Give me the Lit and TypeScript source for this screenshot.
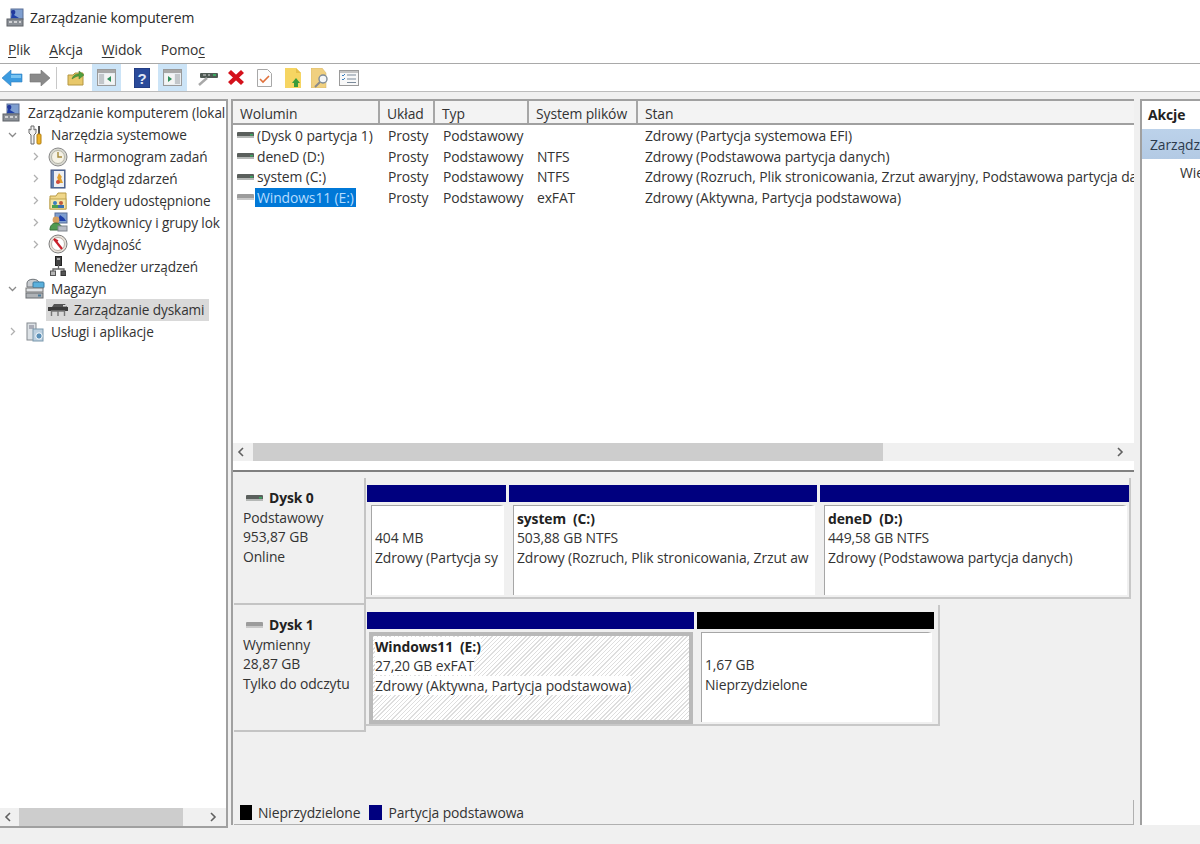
import { LitElement, html, css, svg } from "lit";
import { customElement } from "lit/decorators.js";

const ic = (w: number, h: number, body: unknown) =>
  html`<svg width=${w} height=${h} viewBox="0 0 ${w} ${h}" style="display:block;flex:none">${body}</svg>`;

const compIcon = ic(18, 19, svg`
  <rect x="5" y="1" width="12" height="10" fill="#7f9fd0" stroke="#5a6f96"/>
  <path d="M7 2c3 0 3 3 1 5l5 3H5z" fill="#1f3fa8"/>
  <circle cx="7" cy="4" r="2" fill="#23389a"/>
  <rect x="1" y="11" width="16" height="7" fill="#8a8f96" stroke="#5f6368"/>
  <path d="M3 14h3M8 14h3M13 14h2" stroke="#e8e8e8" stroke-width="1.5"/>`);
const toolsIcon = ic(16, 20, svg`
  <path d="M4 1v4l-2-1v4l2 2v9h3v-9l2-2V4L7 5V1z" fill="#f2f2f2" stroke="#6b6b6b"/>
  <path d="M12 1v8" stroke="#555" stroke-width="2"/>
  <rect x="10" y="9" width="4" height="10" rx="1" fill="#f0b428" stroke="#b27e10"/>`);
const clockIcon = ic(20, 20, svg`
  <circle cx="10" cy="10" r="9" fill="#d8d8d0" stroke="#8a8a8a"/>
  <circle cx="10" cy="10" r="6.5" fill="#f5f2e6" stroke="#b5b5a8"/>
  <path d="M10 5v5h4" fill="none" stroke="#a58a3c" stroke-width="1.4"/>`);
const bookIcon = ic(16, 20, svg`
  <rect x="1" y="1" width="14" height="18" fill="#5f7fb0" stroke="#3d4f7a"/>
  <rect x="4" y="2" width="10" height="16" fill="#eef0f2"/>
  <path d="M9 4l3 4-1 1 2 5H6l2-4-1-1z" fill="#e0a030"/>
  <circle cx="8" cy="13" r="2" fill="#d04a3a"/>`);
const shareIcon = ic(18, 18, svg`
  <path d="M1 4h6l2-3h8v16H1z" fill="#f0d78a" stroke="#b99b45"/>
  <rect x="1" y="7" width="16" height="10" fill="#f6e6a8" stroke="#c0a550"/>
  <circle cx="6" cy="11" r="2" fill="#3a7fc0"/><rect x="3" y="13" width="6" height="3" fill="#4aa050"/>
  <circle cx="12" cy="11" r="2" fill="#c05a3a"/><rect x="9" y="13" width="6" height="3" fill="#3a70b0"/>`);
const usersIcon = ic(20, 20, svg`
  <rect x="7" y="1" width="12" height="10" fill="#7f9fd0" stroke="#5a6f96"/>
  <path d="M9 9l3-6 4 3 2 3z" fill="#1f3fa8"/>
  <circle cx="8" cy="8" r="3.4" fill="#d8a060"/>
  <path d="M2 18c0-5 3-7 6-7s6 2 6 7z" fill="#4f9a50" stroke="#386f3a"/>
  <rect x="10" y="14" width="9" height="5" fill="#b8bcc4" stroke="#7f848c"/>`);
const perfIcon = ic(20, 20, svg`
  <circle cx="10" cy="10" r="9" fill="#e6e0d8" stroke="#7f7f7f"/>
  <circle cx="10" cy="10" r="6.5" fill="#fff" stroke="#b9b0a8"/>
  <path d="M6 5l8 10" stroke="#c8202a" stroke-width="2.2"/>
  <path d="M6 5l4 2" stroke="#c8202a" stroke-width="1.6"/>`);
const devIcon = ic(16, 20, svg`
  <rect x="5.5" y="0.5" width="6" height="9" fill="#444" stroke="#222"/>
  <rect x="7" y="2" width="3" height="2" fill="#aaa"/>
  <path d="M8.5 9v4M3 16v-3h11v3" fill="none" stroke="#666" stroke-width="1.3"/>
  <rect x="0.5" y="15" width="5" height="4.5" fill="#b5b5b5" stroke="#555"/>
  <rect x="11" y="15" width="5" height="4.5" fill="#555" stroke="#333"/>`);
const storeIcon = ic(20, 21, svg`
  <path d="M2 5c0-5 12-5 12 0v4H2z" fill="#c8ccd0" stroke="#70757a"/>
  <rect x="8" y="4" width="11" height="6" rx="1" fill="#5ab0dc" stroke="#3a7aa0"/>
  <rect x="1" y="10" width="17" height="4" fill="#dfe2e5" stroke="#777"/>
  <rect x="1" y="15" width="17" height="5" fill="#aeb2b6" stroke="#6a6e72"/>
  <rect x="13" y="16.5" width="3" height="2" fill="#4a7a9a"/>`);
const dmIcon = ic(20, 14, svg`
  <rect x="0" y="4" width="20" height="4" fill="#3c3c3c"/>
  <path d="M6 1h11l2 3H4z" fill="#555"/>
  <rect x="15" y="2" width="3" height="1.5" fill="#ddd"/>
  <path d="M3.5 13V8h13v5M10 8v5" fill="none" stroke="#777" stroke-width="1.4"/>`);
const svcIcon = ic(18, 20, svg`
  <rect x="1" y="1" width="9" height="17" fill="#dde2e6" stroke="#848a90"/>
  <path d="M3 4h5M3 6h5" stroke="#778"/>
  <rect x="7" y="7" width="10" height="12" fill="#bcd0e0" stroke="#7a98ac"/>
  <circle cx="13" cy="14" r="3.2" fill="#5a90b8" stroke="#fff"/>`);

const diskIcon = (dark: boolean) => ic(17, 8, svg`
  <rect x="0" y="1" width="17" height="5" rx="1" fill=${dark ? "#5a5f5c" : "#9c9c9c"}/>
  <rect x="0" y="5" width="17" height="2" fill=${dark ? "#b5b8b6" : "#c9c9c9"}/>
  ${dark ? svg`<rect x="13" y="3" width="3" height="1.5" fill="#3aa860"/>` : ""}`);

const toolbar = [
  ic(21, 16, svg`<path d="M0 8l9-8v4h11v8H9v4z" fill="#3b9be0" stroke="#2f7fc0" stroke-width=".6"/><rect x="9" y="5" width="10" height="3" fill="#78c4f2"/>`),
  ic(21, 16, svg`<path d="M21 8l-9-8v4H1v8h11v4z" fill="#8a8a8a" stroke="#747474" stroke-width=".6"/>`),
  html`<span class="sep"></span>`,
  ic(18, 17, svg`<path d="M1 6h5l2-2h8v12H1z" fill="#e8c86a" stroke="#b49640"/><path d="M5 10c1-4 4-5 7-5V2l5 4-5 4V7c-2 0-4 1-7 3z" fill="#4f9e3e" stroke="#3a7a2e" stroke-width=".5"/>`),
  html`<span class="on">${ic(19, 17, svg`<rect x=".5" y=".5" width="18" height="16" fill="#e9eef2" stroke="#9a9a9a"/><rect x="1" y="1" width="17" height="3" fill="#a8a8a8"/><rect x="2" y="5" width="5" height="10" fill="#c2c6ca"/><rect x="8" y="5" width="9" height="10" fill="#f4f4f4"/><path d="M14 7v6l-4-3z" fill="#2e8f5c"/>`)}</span>`,
  html`<span class="help">${ic(16, 20, svg`<rect x="0" y="0" width="16" height="20" fill="#2a4a9a" stroke="#1c3272"/><text x="8" y="16" font-size="15" font-weight="700" text-anchor="middle" fill="#dfe6f6" font-family="Liberation Sans">?</text>`)}</span>`,
  html`<span class="on">${ic(19, 17, svg`<rect x=".5" y=".5" width="18" height="16" fill="#e9eef2" stroke="#9a9a9a"/><rect x="1" y="1" width="17" height="3" fill="#a8a8a8"/><rect x="2" y="5" width="9" height="10" fill="#f4f4f4"/><rect x="12" y="5" width="5" height="10" fill="#c2c6ca"/><path d="M5 7v6l4-3z" fill="#2e8f5c"/>`)}</span>`,
  html`<span class="dsk">${ic(20, 18, svg`<rect x="2" y="4" width="18" height="5" rx="1" fill="#4f5a54"/><path d="M5 6h3M10 6h2" stroke="#d8d8d8"/><rect x="15" y="5" width="3" height="2" fill="#3aa860"/><path d="M9 9L1 16" stroke="#a8a8a8" stroke-width="2.4"/>`)}</span>`,
  ic(18, 17, svg`<path d="M2.500 2.500l13 12M15.500 2.500l-13 12" stroke="#d4111b" stroke-width="4.400" fill="none"/>`),
  ic(15, 18, svg`<path d="M.5.5h10l4 4v13H.5z" fill="#fdfdfd" stroke="#a8a8a8"/><path d="M3 10l3 3 6-6" fill="none" stroke="#e0703a" stroke-width="1.6"/>`),
  ic(16, 20, svg`<path d="M0 0h11l5 5v15H0z" fill="#f6d562"/><path d="M11 0l5 5h-5z" fill="#e6c04a"/><path d="M11 10l4 5h-2v4H9v-4H7z" fill="#3a9c3a"/>`),
  ic(18, 20, svg`<path d="M0 0h11l4 5v15H0z" fill="#f0d080" stroke="#d0b060" stroke-width=".5"/><circle cx="12" cy="11" r="4" fill="#f4f6f8" stroke="#7f8c98" stroke-width="1.4"/><path d="M9 14l-5 5" stroke="#8a8a8a" stroke-width="2"/>`),
  ic(20, 16, svg`<rect x=".5" y=".5" width="19" height="15" fill="#f8f8f8" stroke="#9a9a9a"/><rect x="1" y="1" width="18" height="2" fill="#c4c4c4"/><path d="M3 5l1 1 2-2M3 9l1 1 2-2" fill="none" stroke="#3a7fc0"/><path d="M8 5h9M8 9h9M8 12.500h9" stroke="#7a8a9a"/>`),
];

const tree: [number, string, string, unknown, boolean?][] = [
  [0, "", "Zarządzanie komputerem (lokal", compIcon],
  [1, "v", "Narzędzia systemowe", toolsIcon],
  [2, ">", "Harmonogram zadań", clockIcon],
  [2, ">", "Podgląd zdarzeń", bookIcon],
  [2, ">", "Foldery udostępnione", shareIcon],
  [2, ">", "Użytkownicy i grupy lok", usersIcon],
  [2, ">", "Wydajność", perfIcon],
  [2, "", "Menedżer urządzeń", devIcon],
  [1, "v", "Magazyn", storeIcon],
  [2, "", "Zarządzanie dyskami", dmIcon, true],
  [1, ">", "Usługi i aplikacje", svcIcon],
];

const vols = [
  ["(Dysk 0 partycja 1)", "", "Zdrowy (Partycja systemowa EFI)"],
  ["deneD (D:)", "NTFS", "Zdrowy (Podstawowa partycja danych)"],
  ["system (C:)", "NTFS", "Zdrowy (Rozruch, Plik stronicowania, Zrzut awaryjny, Podstawowa partycja da"],
  ["Windows11 (E:)", "exFAT", "Zdrowy (Aktywna, Partycja podstawowa)"],
];

const chev = (d: string) =>
  d === ""
    ? html`<span class="chev"></span>`
    : html`<span class="chev">${ic(9, 9, d === "v"
        ? svg`<path d="M1 3l3.500 3.500L8 3" fill="none" stroke="#8a8a8a" stroke-width="1.3"/>`
        : svg`<path d="M3 1l3.500 3.500L3 8" fill="none" stroke="#b0b0b0" stroke-width="1.3"/>`)}</span>`;

const arrow = (left: boolean) => ic(8, 10, svg`<path d=${left ? "M6 1L2 5l4 4" : "M2 1l4 4-4 4"} fill="none" stroke="#606060" stroke-width="1.6"/>`);

@customElement("app-root")
export class AppRoot extends LitElement {
  static styles = css`
    :host { display: flex; flex-direction: column; width: 1200px; height: 844px; overflow: hidden; background: #f0f0f0;
      font: 13.9px "Open Sans", "Noto Sans", sans-serif; color: #333; letter-spacing: -0.1px; }
    .title { height: 34px; background: #fff; display: flex; align-items: center; gap: 6px; padding-left: 6px; color: #2a2a2a; }
    .menu { background: #fff; display: flex; align-items: center; padding: 2px 0 0 8px; gap: 19px; box-sizing: border-box; border-bottom: 1px solid #a9a9a9; flex: none; height: 30px; }
    .tools { height: 28px; background: #fff; display: grid; grid-template-columns: 25px 28px 7px 32px 29px 36px 30px 37px 24px 32px 25px 30px 27px; border-bottom: 1px solid #bcbcbc; flex: none; box-sizing: border-box; }
    .tools > * { justify-self: center; align-self: center; }
    .sep { display: block; width: 1px; height: 22px; background: #c8c8c8; }
    .on { display: flex; align-items: center; justify-content: center; width: 29px; height: 27px; background: #cce4f7; }
    .help { margin-left: 6px; }
    .dsk { margin-left: 5px; }
    .main { flex: 1; display: flex; gap: 3px; padding-top: 7px; min-height: 0; }
    .left { width: 226px; height: 725px; flex: none; background: #fff; border: solid #a0a0a0; border-width: 2px 2px 2px 0; display: flex; flex-direction: column; }
    .treebox { flex: 1; overflow: hidden; padding-top: 1px; display: grid; grid-auto-rows: 21.9px; align-content: start; font-size: 13.6px; }
    .tr { display: flex; align-items: center; white-space: nowrap; min-width: 0; overflow: hidden; color: #333; }
    .tr.l0 { padding-left: 1px; }
    .tr.l1 { padding-left: 7px; }
    .tr.l2 { padding-left: 30px; }
    .chev { width: 18px; flex: none; display: flex; padding-left: 1px; box-sizing: border-box; }
    .ti { width: 20px; flex: none; display: flex; justify-content: center; }
    .lbl { padding-left: 6px; }
    .tr.l0 .lbl { padding-left: 7px; }
    .tr.sel { background: linear-gradient(#d9d9d9, #d9d9d9) 46px 0 / 163px 100% no-repeat; }
    .hscroll { height: 18px; flex: none; background: #f0f0f0; display: flex; align-items: center; justify-content: space-between; padding: 0 9px 0 4px; position: relative; }
    .thumb-l { position: absolute; left: 19px; top: 0; bottom: 0; width: 164px; background: #cdcdcd; }
    .center { width: 901px; height: 726px; flex: none; border-left: 2px solid #a0a0a0; display: flex; flex-direction: column; }
    .list { background: #fff; border-top: 2px solid #a0a0a0; border-bottom: 2px solid #808080; box-sizing: border-box; height: 373px; flex: none; display: flex; flex-direction: column; }
    .row { display: grid; grid-template-columns: 147px 55px 94px 109px 1fr; white-space: nowrap; }
    .head { height: 24px; box-sizing: border-box; background: #f3f3f3; border-bottom: 2px solid #a0a0a0; flex: none; }
    .head span { padding: 3px 0 0 7px; border-right: 2px solid #a6a6a6; overflow: hidden; }
    .head span:last-child { border-right: none; }
    .rows { flex: 1; display: grid; grid-auto-rows: 20.7px; align-content: start; }
    .rows .row { align-items: center; }
    .rows .row > span { padding-left: 8px; overflow: hidden; }
    .rows .row > span:last-child { padding-left: 7px; }
    .rows .row > .c1 { display: flex; align-items: center; gap: 3px; padding-left: 4px; }
    .hl { background: #0078d7; color: #b5dcff; padding: 0 2px; margin-left: -2px; }
    .vscroll { height: 18px; flex: none; background: #f0f0f0; display: flex; align-items: center; justify-content: space-between; padding: 0 10px 0 4px; position: relative; margin-bottom: 9px; }
    .thumb-c { position: absolute; left: 20px; top: 0; bottom: 0; width: 630px; background: #cdcdcd; }
    .graph { flex: 1; display: flex; flex-direction: column; padding: 6px 0 0 1px; min-height: 0; }
    .disk { display: flex; height: 127px; flex: none; }
    .info { height: 127px; box-sizing: border-box; width: 132px; flex: none; border: solid #c4c4c4; border-width: 0 2px 2px 0; padding: 10px 0 0 9px; line-height: 19.4px; }
    .dname { display: flex; align-items: center; gap: 6px; font-weight: 700; color: #222; margin: -1px 0 0 3px; height: 21px; }
    .parts { display: flex; border: solid #c8c8c8; border-width: 0 2px 2px 0; height: 112px; padding: 7px 0 0 1px; gap: 3px; align-self: flex-start; }
    .d1 .parts { padding-right: 4px; }
    .part { display: flex; flex-direction: column; flex: none; }
    .bar { height: 17px; flex: none; background: #00007f; }
    .bar.k { background: #000; }
    .body { height: 90px; margin: 3px 2px 0 4px; background: #fff; border: solid #a6a6a6; border-width: 1px 0 0 1px; border-right: 4px solid #fff; padding: 3px 0 0 3px; line-height: 19.4px; overflow: hidden; white-space: nowrap; box-sizing: border-box; }
    .body.sel { margin: 3px 1px 0 2px; height: 92px; border: 4px solid #b9b9b9; padding: 1px 0 0 2px; background: repeating-linear-gradient(135deg, #dedede 0 1px, #fff 1px 3px); }
    .body.sel span { background: #fff; }
    .body b { color: #222; display: block; }
    .body .sp { display: block; height: 19.4px; }
    .p138 { width: 139px; } .p308 { width: 308px; } .p309 { width: 309px; } .p326 { width: 327px; } .p237 { width: 237px; }
    .legend { margin-top: auto; height: 24px; flex: none; display: flex; align-items: center; gap: 6px; border-bottom: 1px solid #b0b0b0; border-right: 1px solid #b0b0b0; padding-left: 6px; }
    .sw { width: 12px; height: 15px; flex: none; background: #000; }
    .sw.b { background: #00007f; margin-left: 3px; width: 13px; }
    .right { flex: 1; margin-left: 3px; height: 724px; background: #fff; border-left: 2px solid #a0a0a0; border-top: 2px solid #a0a0a0; white-space: nowrap; overflow: hidden; }
    .ah { height: 28px; padding: 4px 0 0 6px; box-sizing: border-box; font-weight: 700; color: #222; }
    .az { height: 30px; background: linear-gradient(#bcd2ea, #b3cae4); display: flex; align-items: center; padding-left: 8px; color: #2c3a4c; }
    .aw { padding: 4px 0 0 38px; }
    u { text-underline-offset: 2px; }
  `;

  render() {
    return html`
      <div class="title">${compIcon}<span>Zarządzanie komputerem</span></div>
      <div class="menu">
        <span><u>P</u>lik</span><span><u>A</u>kcja</span><span><u>W</u>idok</span><span>Pomo<u>c</u></span>
      </div>
      <div class="tools">${toolbar}</div>
      <div class="main">
        <div class="left">
          <div class="treebox">
            ${tree.map(([l, c, t, i, s]) => html`
              <div class="tr l${l} ${s ? "sel" : ""}">
                ${l ? chev(c) : ""}<span class="ti">${i}</span><span class="lbl">${t}</span>
              </div>`)}
          </div>
          <div class="hscroll"><span class="thumb-l"></span>${arrow(true)}${arrow(false)}</div>
        </div>
        <div class="center">
          <div class="list">
            <div class="row head"><span>Wolumin</span><span>Układ</span><span>Typ</span><span>System plików</span><span>Stan</span></div>
            <div class="rows">
              ${vols.map((v, i) => html`
                <div class="row">
                  <span class="c1">${diskIcon(i < 3)}<span class=${i === 3 ? "hl" : ""}>${v[0]}</span></span>
                  <span>Prosty</span><span>Podstawowy</span><span>${v[1]}</span><span>${v[2]}</span>
                </div>`)}
            </div>
            <div class="vscroll"><span class="thumb-c"></span>${arrow(true)}${arrow(false)}</div>
          </div>
          <div class="graph">
            <div class="disk">
              <div class="info">
                <div class="dname">${diskIcon(true)}Dysk 0</div>
                Podstawowy<br />953,87 GB<br />Online
              </div>
              <div class="parts">
                <div class="part p138"><div class="bar"></div><div class="body"><span class="sp"></span>404 MB<br />Zdrowy (Partycja sy</div></div>
                <div class="part p308"><div class="bar"></div><div class="body"><b>system&nbsp; (C:)</b>503,88 GB NTFS<br />Zdrowy (Rozruch, Plik stronicowania, Zrzut aw</div></div>
                <div class="part p309"><div class="bar"></div><div class="body"><b>deneD&nbsp; (D:)</b>449,58 GB NTFS<br />Zdrowy (Podstawowa partycja danych)</div></div>
              </div>
            </div>
            <div class="disk d1">
              <div class="info">
                <div class="dname">${diskIcon(false)}Dysk 1</div>
                Wymienny<br />28,87 GB<br />Tylko do odczytu
              </div>
              <div class="parts">
                <div class="part p326"><div class="bar"></div><div class="body sel"><b><span>Windows11&nbsp; (E:)</span></b><span>27,20 GB exFAT</span><br /><span>Zdrowy (Aktywna, Partycja podstawowa)</span></div></div>
                <div class="part p237"><div class="bar k"></div><div class="body"><span class="sp"></span>1,67 GB<br />Nieprzydzielone</div></div>
              </div>
            </div>
            <div class="legend"><span class="sw"></span>Nieprzydzielone<span class="sw b"></span>Partycja podstawowa</div>
          </div>
        </div>
        <div class="right">
          <div class="ah">Akcje</div>
          <div class="az">Zarządza</div>
          <div class="aw">Wie</div>
        </div>
      </div>
    `;
  }
}
